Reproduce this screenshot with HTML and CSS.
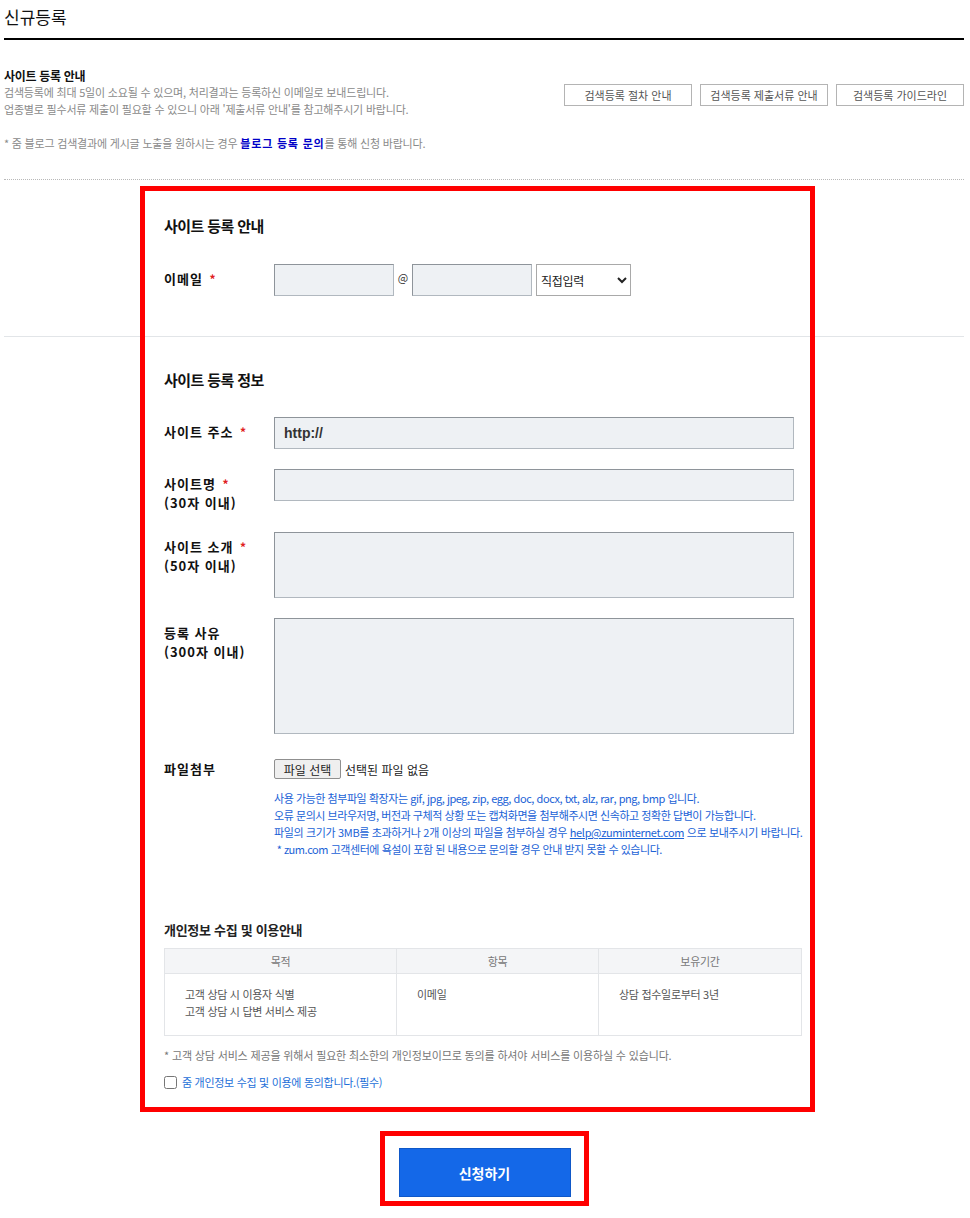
FILE: index.html
```html
<!DOCTYPE html>
<html lang="ko">
<head>
  <meta charset="UTF-8" />
  <meta name="viewport" content="width=device-width, initial-scale=1.0"/>
  <title>신규등록</title>
  <link rel="stylesheet" href="styles.css">
</head>
<body>
  <div class="wrap">
    <h2 class="page_title">신규등록</h2>

    <div class="notice">
      <div class="notice_text">
        <p class="notice_title">사이트 등록 안내</p>
        <p>검색등록에 최대 5일이 소요될 수 있으며, 처리결과는 등록하신 이메일로 보내드립니다.<br>업종별로 필수서류 제출이 필요할 수 있으니 아래 '제출서류 안내'를 참고해주시기 바랍니다.</p>
        <p class="notice_blog">* 줌 블로그 검색결과에 게시글 노출을 원하시는 경우 <a href="#">블로그 등록 문의</a>를 통해 신청 바랍니다.</p>
      </div>
      <div class="guide_buttons">
        <button class="guide_btn">검색등록 절차 안내</button>
        <button class="guide_btn">검색등록 제출서류 안내</button>
        <button class="guide_btn">검색등록 가이드라인</button>
      </div>
    </div>

    <div class="form_area">
      <div class="form_section section_mail">
        <div class="form_inner">
          <h3 class="section_title">사이트 등록 안내</h3>
          <div class="form_row">
            <label class="form_label">이메일 <span class="req">*</span></label>
            <div class="email_field">
              <input type="text" class="text_input email_input" />
              <span class="at">@</span>
              <input type="text" class="text_input email_input" />
              <select class="email_select">
                <option>직접입력</option>
                <option>naver.com</option>
                <option>gmail.com</option>
              </select>
            </div>
          </div>
        </div>
      </div>

      <div class="form_section section_info">
        <div class="form_inner">
          <h3 class="section_title">사이트 등록 정보</h3>

          <div class="form_row">
            <label class="form_label">사이트 주소 <span class="req">*</span></label>
            <input type="text" class="text_input wide_input url_input" value="http://" />
          </div>

          <div class="form_row">
            <label class="form_label">사이트명 <span class="req">*</span><br>(30자 이내)</label>
            <input type="text" class="text_input wide_input" />
          </div>

          <div class="form_row">
            <label class="form_label">사이트 소개 <span class="req">*</span><br>(50자 이내)</label>
            <textarea class="text_input wide_input intro_area"></textarea>
          </div>

          <div class="form_row">
            <label class="form_label">등록 사유<br>(300자 이내)</label>
            <textarea class="text_input wide_input reason_area"></textarea>
          </div>

          <div class="form_row file_row">
            <label class="form_label">파일첨부</label>
            <div class="file_field">
              <div class="file_pick">
                <button class="file_btn">파일 선택</button>
                <span class="file_name">선택된 파일 없음</span>
              </div>
              <p class="file_help">
                사용 가능한 첨부파일 확장자는 gif, jpg, jpeg, zip, egg, doc, docx, txt, alz, rar, png, bmp 입니다.<br>
                오류 문의시 브라우저명, 버전과 구체적 상황 또는 캡쳐화면을 첨부해주시면 신속하고 정확한 답변이 가능합니다.<br>
                <span class="help_wide">파일의 크기가 3MB를 초과하거나 2개 이상의 파일을 첨부하실 경우 <a href="#">help@zuminternet.com</a> 으로 보내주시기 바랍니다.</span><br>
                &nbsp;* zum.com 고객센터에 욕설이 포함 된 내용으로 문의할 경우 안내 받지 못할 수 있습니다.
              </p>
            </div>
          </div>

          <h4 class="privacy_title">개인정보 수집 및 이용안내</h4>
          <table class="privacy_table">
            <tr>
              <th class="col_purpose">목적</th>
              <th class="col_item">항목</th>
              <th>보유기간</th>
            </tr>
            <tr>
              <td>고객 상담 시 이용자 식별<br>고객 상담 시 답변 서비스 제공</td>
              <td>이메일</td>
              <td>상담 접수일로부터 3년</td>
            </tr>
          </table>
          <p class="privacy_note">* 고객 상담 서비스 제공을 위해서 필요한 최소한의 개인정보이므로 동의를 하셔야 서비스를 이용하실 수 있습니다.</p>
          <label class="agree"><input type="checkbox" class="agree_check" /> 줌 개인정보 수집 및 이용에 동의합니다.(필수)</label>
        </div>
      </div>

      <div class="red_mark"></div>
    </div>

    <div class="submit_area">
      <div class="submit_mark">
        <button class="submit_btn">신청하기</button>
      </div>
    </div>
  </div>
</body>
</html>
```

FILE: styles.css
```css
body {
  margin: 0;
  font-family: "Noto Sans CJK KR", "Noto Sans", sans-serif;
  color: #222;
  background-color: #fff;
}

p {
  margin: 0;
}

.wrap {
  width: 960px;
  margin: 0 4px;
}

.page_title {
  margin: 0;
  padding: 6px 0 10px;
  font-size: 17px;
  line-height: 22px;
  font-weight: normal;
  color: #111;
  border-bottom: 2px solid #000;
}

/* top notice */
.notice {
  display: flex;
  justify-content: space-between;
  padding: 27px 0 27px;
  border-bottom: 1px dotted #b8b8b8;
}

.notice_text {
  font-size: 11px;
  line-height: 17px;
  letter-spacing: -0.2px;
  color: #8a8a8a;
}

.notice_title {
  font-size: 12px;
  font-weight: bold;
  color: #111;
  letter-spacing: -0.3px;
}

.notice_blog {
  margin-top: 17px;
}

.notice_blog a {
  color: #0000c8;
  font-weight: bold;
  letter-spacing: 0.8px;
  text-decoration: none;
}

.guide_buttons {
  display: flex;
  gap: 8px;
  margin-top: 17px;
}

.guide_btn {
  width: 128px;
  height: 22px;
  padding: 0;
  background-color: #fff;
  border: 1px solid #b4b4b4;
  font-family: inherit;
  font-size: 11px;
  letter-spacing: 0;
  color: #555;
  cursor: pointer;
}

/* form */
.form_area {
  position: relative;
}

.form_section {
  border-bottom: 1px solid #e2e5e8;
}

.section_mail {
  padding: 36px 0 40px;
}

.section_info {
  padding: 33px 0 20px;
  border-bottom: none;
}

.form_inner {
  width: 640px;
  margin: 0 auto;
}

.section_title {
  margin: 0 0 27px;
  font-size: 15px;
  line-height: 20px;
  letter-spacing: -0.6px;
  color: #111;
}

.section_mail .section_title {
  margin-bottom: 28px;
}

.form_row {
  display: flex;
  align-items: flex-start;
  margin-bottom: 20px;
}

.section_mail .form_row {
  margin-bottom: 0;
}

.form_label {
  width: 110px;
  flex-shrink: 0;
  padding-top: 5px;
  font-size: 13px;
  line-height: 19px;
  font-weight: bold;
  letter-spacing: 1px;
  color: #111;
}

.req {
  color: #e02020;
  font-size: 12px;
  margin-left: 2px;
}

.text_input {
  box-sizing: border-box;
  height: 32px;
  background-color: #eef1f4;
  border: 1px solid #b1b8bf;
  border-top-color: #8e949a;
  border-left-color: #8e949a;
  font-family: inherit;
  padding: 0 9px;
  margin: 0;
  border-radius: 0;
}

.email_field {
  display: flex;
  align-items: center;
}

.email_input {
  width: 120px;
}

.at {
  width: 18px;
  text-align: center;
  font-size: 11px;
  color: #333;
  margin-top: -6px;
}

.email_select {
  box-sizing: border-box;
  width: 95px;
  height: 32px;
  margin-left: 4px;
  background-color: #fff;
  border: 1px solid #a9a9a9;
  border-radius: 0;
  font-family: inherit;
  font-size: 12px;
  letter-spacing: -0.3px;
  color: #222;
}

.wide_input {
  width: 520px;
}

.url_input {
  font-family: "Liberation Sans", Arial, sans-serif;
  font-size: 14px;
  font-weight: bold;
  color: #333;
}

textarea.text_input {
  resize: none;
  padding: 6px 9px;
}

.intro_area {
  height: 66px;
}

.reason_area {
  height: 116px;
}

.file_row {
  margin-top: 25px;
}

.file_row .form_label {
  padding-top: 0;
  line-height: 20px;
}

.file_pick {
  display: flex;
  align-items: center;
}

.file_btn {
  box-sizing: border-box;
  width: 67px;
  height: 20px;
  padding: 0;
  background-color: #efefef;
  border: 1px solid #8f8f8f;
  border-radius: 2px;
  font-family: inherit;
  font-size: 12px;
  color: #222;
}

.file_name {
  margin-left: 4px;
  font-size: 12px;
  color: #222;
}

.file_help {
  margin-top: 11px;
  font-size: 11px;
  line-height: 17px;
  letter-spacing: -0.45px;
  color: #1a62d6;
}

.help_wide {
  letter-spacing: -0.35px;
}

.file_help a {
  color: #1a62d6;
}

/* privacy */
.privacy_title {
  margin: 63px 0 9px;
  font-size: 13px;
  line-height: 18px;
  letter-spacing: -0.3px;
  color: #222;
}

.privacy_table {
  width: 638px;
  border-collapse: collapse;
  font-size: 11px;
  letter-spacing: -0.3px;
}

.privacy_table th {
  height: 24px;
  padding: 0;
  background-color: #f4f5f7;
  border: 1px solid #e3e5e8;
  font-weight: normal;
  color: #777;
}

.privacy_table td {
  vertical-align: top;
  padding: 12px 20px 15px;
  line-height: 17px;
  border: 1px solid #e3e5e8;
  color: #555;
}

.col_purpose {
  width: 231px;
}

.col_item {
  width: 201px;
}

.privacy_note {
  margin-top: 11px;
  font-size: 11px;
  line-height: 17px;
  letter-spacing: -0.15px;
  color: #777;
}

.agree {
  display: flex;
  align-items: center;
  margin-top: 10px;
  font-size: 11px;
  line-height: 17px;
  letter-spacing: -0.3px;
  color: #1d6fd8;
}

.agree_check {
  width: 13px;
  height: 13px;
  margin: 0 5px 0 0;
}

.red_mark {
  position: absolute;
  left: 136px;
  top: 6px;
  width: 675px;
  height: 926px;
  box-sizing: border-box;
  border: 5px solid #ff0000;
  pointer-events: none;
}

/* submit */
.submit_area {
  display: flex;
  justify-content: center;
  padding-top: 20px;
}

.submit_mark {
  padding: 12px 13px 4px 14px;
  border: 5px solid #ff0000;
}

.submit_btn {
  display: block;
  width: 172px;
  height: 49px;
  background-color: #1468e8;
  border: 1px solid #0f58c8;
  color: #fff;
  font-family: inherit;
  font-size: 14px;
  font-weight: bold;
  cursor: pointer;
}
```
